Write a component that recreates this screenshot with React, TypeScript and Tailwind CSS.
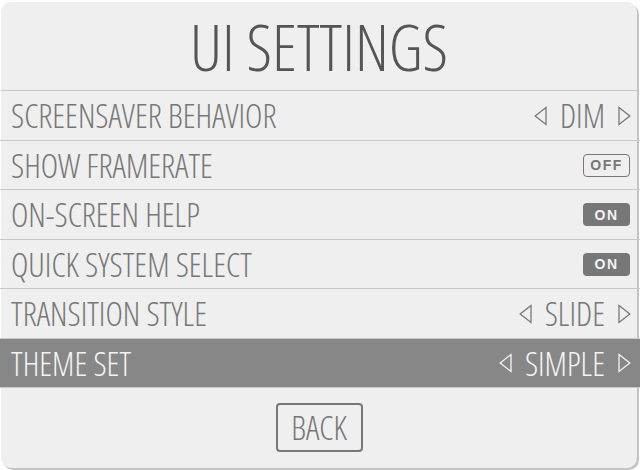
import React from 'react';

type Row = {
  label: string;
  kind: 'list' | 'switch';
  value?: string;
  on?: boolean;
  selected?: boolean;
  h: string;
};

const rows: Row[] = [
  { label: 'SCREENSAVER BEHAVIOR', kind: 'list', value: 'DIM', h: 'h-[50px]' },
  { label: 'SHOW FRAMERATE', kind: 'switch', on: false, h: 'h-[49px]' },
  { label: 'ON-SCREEN HELP', kind: 'switch', on: true, h: 'h-[50px]' },
  { label: 'QUICK SYSTEM SELECT', kind: 'switch', on: true, h: 'h-[49px]' },
  { label: 'TRANSITION STYLE', kind: 'list', value: 'SLIDE', h: 'h-[50px]' },
  { label: 'THEME SET', kind: 'list', value: 'SIMPLE', selected: true, h: 'h-[49px]' },
];

function Arrow({ dir, color }: { dir: 'left' | 'right'; color: string }) {
  return (
    <svg width="13" height="20" viewBox="0 0 13 20" fill="none" stroke={color} strokeWidth={1.3}>
      {dir === 'left' ? (
        <path d="M12 1.5 L1.2 10 L12 18.5 Z" strokeLinejoin="miter" />
      ) : (
        <path d="M1 1.5 L11.8 10 L1 18.5 Z" strokeLinejoin="miter" />
      )}
    </svg>
  );
}

function Switch({ on }: { on: boolean }) {
  return on ? (
    <div className="flex h-[23px] w-[47px] items-center justify-center rounded-[4px] bg-[#777777] text-[14px] font-bold tracking-[1.5px] text-[#f4f4f4] [font-family:'Liberation_Sans',sans-serif]">
      ON
    </div>
  ) : (
    <div className="flex h-[23px] w-[47px] items-center justify-center rounded-[4px] border-[1.5px] border-[#777777] text-[14px] font-bold tracking-[1.5px] text-[#777777] [font-family:'Liberation_Sans',sans-serif]">
      OFF
    </div>
  );
}

export default function App() {
  const font = "[font-family:'Open_Sans',sans-serif] [font-stretch:75%] font-light";
  return (
    <div className="h-[470px] w-[640px] bg-white pt-[2px] pl-[1px]">
      <div className={`relative flex h-[466px] w-[636px] flex-col rounded-[10px] bg-[#efefef] shadow-[2px_2px_0_#c4c4c4] ${font}`}>
        {/* title */}
        <div className="flex h-[89px] items-center justify-center border-b border-[#c8c8c8] pt-[2px] text-[64px] leading-none text-[#555555]">
          UI SETTINGS
        </div>

        {/* rows */}
        {rows.map((r) => {
          const fg = r.selected ? '#f4f4f4' : '#777777';
          return (
            <div
              key={r.label}
              className={`-mr-[4px] -ml-[1px] flex items-center justify-between border-b border-[#c8c8c8] pr-[10px] pl-[11px] text-[33px] leading-none ${r.h} ${
                r.selected ? 'bg-[#878787] text-[#f4f4f4]' : 'text-[#777777]'
              }`}
            >
              <span>{r.label}</span>
              {r.kind === 'list' ? (
                <div className="flex items-center gap-[13px]">
                  <Arrow dir="left" color={fg} />
                  <span>{r.value}</span>
                  <Arrow dir="right" color={fg} />
                </div>
              ) : (
                <div className="mr-[1px]">
                  <Switch on={!!r.on} />
                </div>
              )}
            </div>
          );
        })}

        {/* back */}
        <div className="flex flex-1 items-center justify-center pb-[2px]">
          <div className="flex h-[49px] w-[87px] items-center justify-center rounded-[4px] border-2 border-[#777777] text-[33px] leading-none text-[#777777]">
            BACK
          </div>
        </div>
      </div>
    </div>
  );
}
